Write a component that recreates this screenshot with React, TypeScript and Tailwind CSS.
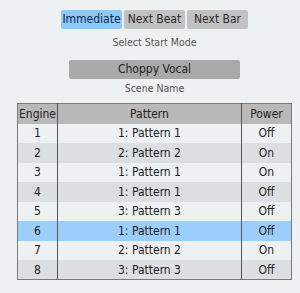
import React from 'react';

type Row = { engine: number; pattern: string; power: 'On' | 'Off' };

const rows: Row[] = [
    { engine: 1, pattern: '1: Pattern 1', power: 'Off' },
    { engine: 2, pattern: '2: Pattern 2', power: 'On' },
    { engine: 3, pattern: '1: Pattern 1', power: 'On' },
    { engine: 4, pattern: '1: Pattern 1', power: 'Off' },
    { engine: 5, pattern: '3: Pattern 3', power: 'Off' },
    { engine: 6, pattern: '1: Pattern 1', power: 'Off' },
    { engine: 7, pattern: '2: Pattern 2', power: 'On' },
    { engine: 8, pattern: '3: Pattern 3', power: 'Off' },
];

const SELECTED = 6;

const modes = ['Immediate', 'Next Beat', 'Next Bar'];

const App: React.FC = () => {
    const active = 'Immediate';

    return (
        <div className="w-[300px] h-[293px] bg-[#eef1f2] text-[#222] font-['DejaVu_Sans_Condensed','Liberation_Sans',sans-serif] text-[12px] pl-[9px] pt-[10px]">
            <div className="flex flex-col items-center">
                <div className="flex gap-[2px]">
                    {modes.map(m => (
                        <button
                            key={m}
                            className={`h-[19px] w-[61px] rounded-[2px] leading-[19px] text-[12px] ${m === active ? 'bg-[#90c8f6] text-[#0c2a55]' : 'bg-[#c2c2c2] text-[#2a2a2a]'}`}
                        >
                            {m}
                        </button>
                    ))}
                </div>
                <p className="mt-[7px] text-[10.5px] text-[#555] leading-[12px]">Select Start Mode</p>

                <div className="mt-[12px] h-[19px] w-[171px] rounded-[2px] bg-[#a9a9a9] text-center leading-[19px] text-[12px] text-[#222]">
                    Choppy Vocal
                </div>
                <p className="mt-[3px] text-[10.5px] text-[#555] leading-[12px]">Scene Name</p>

                <table className="mt-[9px] w-[275px] border-collapse border border-[#7a7a7a] text-[12px] text-center">
                    <thead>
                        <tr className="bg-[#b9b9b9] h-[20px]">
                            <th className="w-[40px] font-normal border-r border-[#555] p-0">Engine</th>
                            <th className="font-normal border-r border-[#555] p-0">Pattern</th>
                            <th className="w-[50px] font-normal p-0">Power</th>
                        </tr>
                    </thead>
                    <tbody>
                        {rows.map((r, i) => (
                            <tr
                                key={r.engine}
                                className={`h-[19.5px] ${r.engine === SELECTED ? 'bg-[#9dcdfb]' : i % 2 === 0 ? 'bg-[#eef1f2]' : 'bg-[#dcdfe1]'}`}
                            >
                                <td className="border-r border-[#555] p-0">{r.engine}</td>
                                <td className="border-r border-[#555] p-0">{r.pattern}</td>
                                <td className="p-0">{r.power}</td>
                            </tr>
                        ))}
                    </tbody>
                </table>
            </div>
        </div>
    );
};

export default App;
